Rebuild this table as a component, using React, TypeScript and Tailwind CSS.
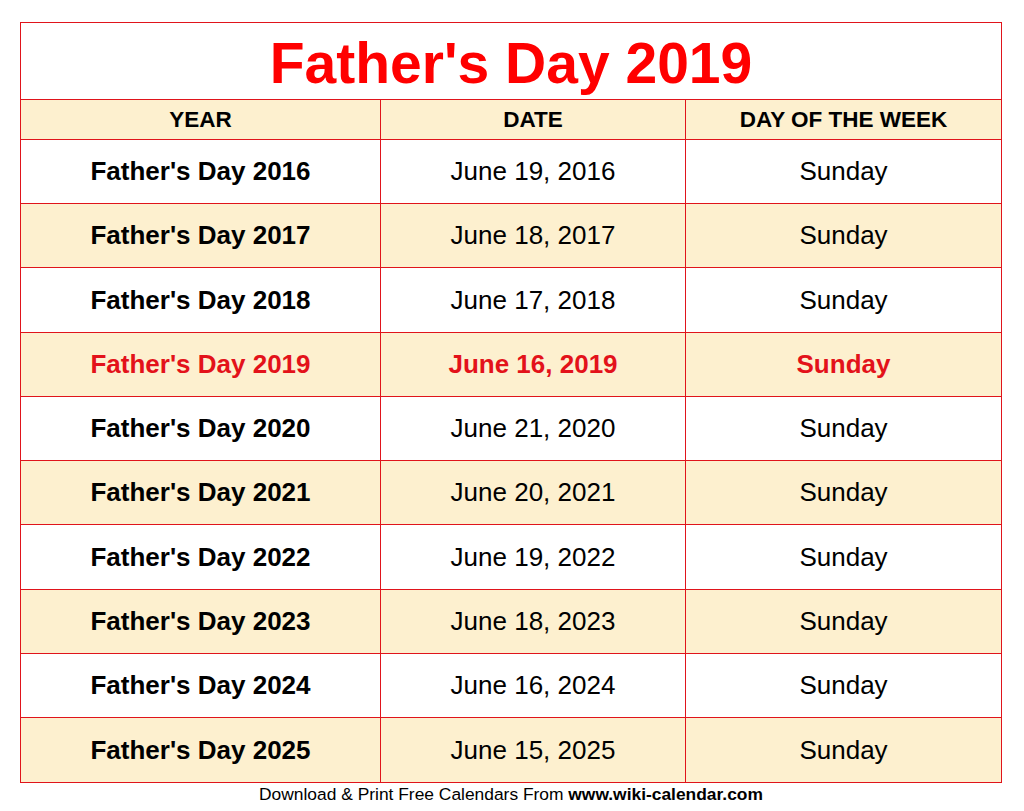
const rows = [
  { year: 2016, date: 'June 19, 2016' },
  { year: 2017, date: 'June 18, 2017' },
  { year: 2018, date: 'June 17, 2018' },
  { year: 2019, date: 'June 16, 2019' },
  { year: 2020, date: 'June 21, 2020' },
  { year: 2021, date: 'June 20, 2021' },
  { year: 2022, date: 'June 19, 2022' },
  { year: 2023, date: 'June 18, 2023' },
  { year: 2024, date: 'June 16, 2024' },
  { year: 2025, date: 'June 15, 2025' },
];

export default function App() {
  return (
    <div
      className="w-[1024px] h-[811px] bg-white pt-[22px] pl-[20px] text-black"
      style={{ fontFamily: '"Liberation Sans", Arial, sans-serif' }}
    >
      <div className="w-[982px] border border-[#e0141b]">
        <div className="h-[77px] flex items-center justify-center border-b border-[#e0141b] text-[57px] font-bold text-[#ff0000] leading-none pt-[4px]">
          Father's Day 2019
        </div>
        <div className="grid grid-cols-[360px_305px_1fr]">
          {['YEAR', 'DATE', 'DAY OF THE WEEK'].map((h, i) => (
            <div
              key={h}
              className={
                'h-[40px] flex items-center justify-center bg-[#fdf0cf] border-b border-[#e0141b] text-[22.5px] font-bold ' +
                (i < 2 ? 'border-r' : '')
              }
            >
              {h}
            </div>
          ))}
          {rows.map((r, idx) => {
            const shaded = idx % 2 === 1;
            const hi = r.year === 2019;
            const tall = idx === 2 || idx === 6;
            const cell =
              'flex items-center justify-center text-[26px] border-[#e0141b] ' +
              (idx < rows.length - 1 ? 'border-b ' : '') +
              (tall ? 'h-[65px] ' : 'h-[64px] ') +
              (shaded ? 'bg-[#fdf0cf] ' : 'bg-white ') +
              (hi ? 'text-[#e3121a] font-bold ' : '');
            return [
              <div key={r.year + 'a'} className={cell + 'border-r font-bold'}>
                Father's Day {r.year}
              </div>,
              <div key={r.year + 'b'} className={cell + 'border-r'}>
                {r.date}
              </div>,
              <div key={r.year + 'c'} className={cell}>
                Sunday
              </div>,
            ];
          })}
        </div>
      </div>
      <div className="w-[982px] text-center text-[17.4px] leading-[20px] mt-[1px] text-black">
        Download &amp; Print Free Calendars From <span className="font-bold">www.wiki-calendar.com</span>
      </div>
    </div>
  );
}
